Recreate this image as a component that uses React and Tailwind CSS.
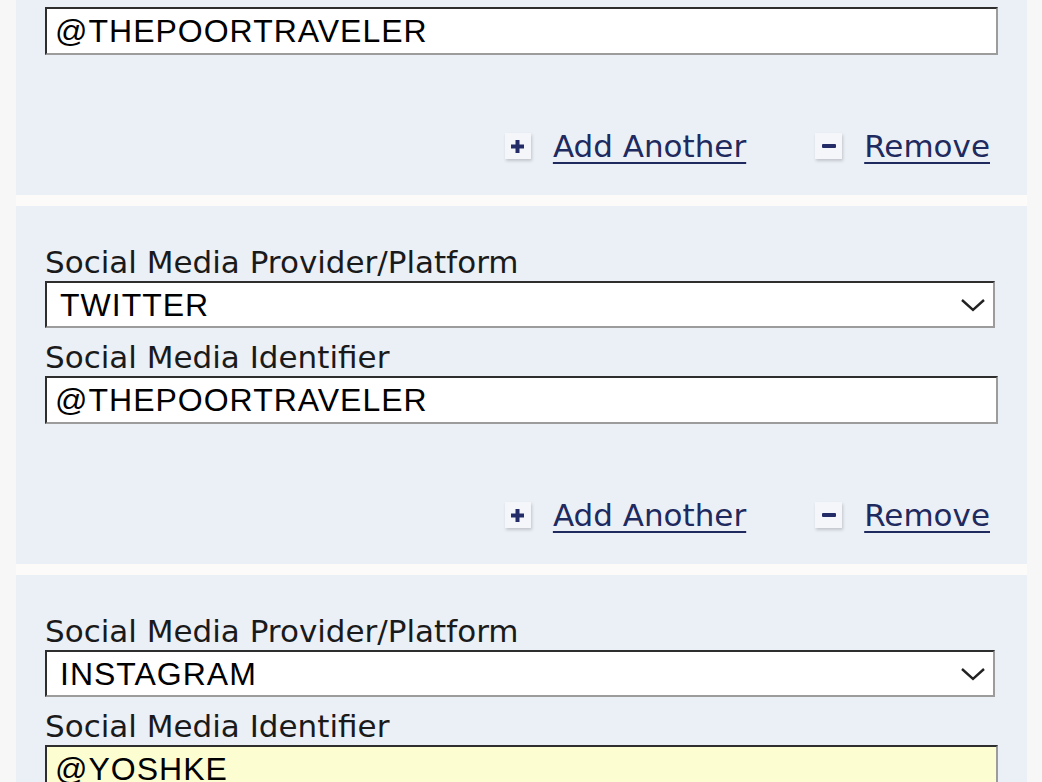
import { useState } from 'react';

const labelFont = { fontFamily: '"DejaVu Sans", Verdana, sans-serif' };
const fieldFont = { fontFamily: '"Liberation Sans", Arial, sans-serif' };

function PlusIcon() {
  return (
    <span className="flex h-[26px] w-[26px] items-center justify-center bg-[#f4f6fa] shadow-[1px_2px_3px_rgba(0,0,0,0.18)]">
      <svg width="15" height="15" viewBox="0 0 15 15">
        <rect x="5.5" y="1" width="4" height="13" fill="#232c66" />
        <rect x="1" y="5.5" width="13" height="4" fill="#232c66" />
      </svg>
    </span>
  );
}

function MinusIcon() {
  return (
    <span className="flex h-[26px] w-[27px] items-center justify-center bg-[#f4f6fa] shadow-[1px_2px_3px_rgba(0,0,0,0.18)]">
      <svg width="16" height="14" viewBox="0 0 16 14">
        <rect x="1" y="5" width="14" height="4" rx="1" fill="#232c66" />
      </svg>
    </span>
  );
}

function Links() {
  return (
    <div className="flex h-[40px] items-center justify-end gap-[22px] pr-[37px] text-[31px] text-[#1f2a5e]" style={labelFont}>
      <PlusIcon />
      <a href="#" className="underline decoration-[2px] underline-offset-[5px]">Add Another</a>
      <span className="w-[25px]" />
      <MinusIcon />
      <a href="#" className="underline decoration-[2px] underline-offset-[5px]">Remove</a>
    </div>
  );
}

function Field({ value, highlight }) {
  return (
    <div
      className={`flex h-[48px] w-[953px] items-center border-2 border-t-[#2e2e2e] border-l-[#2e2e2e] border-b-[#9c9c9c] border-r-[#9c9c9c] pl-[8px] text-[32px] tracking-[1px] text-black ${highlight ? 'bg-[#fdfdd2]' : 'bg-white'}`}
      style={fieldFont}
    >
      {value}
    </div>
  );
}

function Select({ value }) {
  return (
    <div
      className="flex h-[47px] w-[950px] items-center justify-between border-2 border-t-[#2e2e2e] border-l-[#2e2e2e] border-b-[#9c9c9c] border-r-[#9c9c9c] bg-white pl-[13px] pr-[7px] text-[32px] tracking-[1px] text-black"
      style={fieldFont}
    >
      <span>{value}</span>
      <svg width="26" height="16" viewBox="0 0 26 16">
        <path d="M2 3 L13 13 L24 3" fill="none" stroke="#222" strokeWidth="2.4" />
      </svg>
    </div>
  );
}

function Label({ children }) {
  return (
    <div className="flex h-[38px] items-center text-[31px] leading-none text-[#1a1a1a]" style={labelFont}>
      {children}
    </div>
  );
}

function Panel({ platform, identifier, highlight, partial, last }) {
  return (
    <div className={`bg-[#ebf0f7] pl-[29px] pb-[29px] ${partial ? 'pt-[7px]' : 'pt-[37px]'}`}>
      {!partial && (
        <>
          <Label>Social Media Provider/Platform</Label>
          <Select value={platform} />
          <div className="h-[10px]" />
          <Label>Social Media Identifier</Label>
        </>
      )}
      <Field value={identifier} highlight={highlight} />
      {!last && (
        <>
          <div className="h-[71px]" />
          <Links />
        </>
      )}
    </div>
  );
}

export default function App() {
  const [entries] = useState([
    { platform: 'TWITTER', identifier: '@THEPOORTRAVELER', partial: true },
    { platform: 'TWITTER', identifier: '@THEPOORTRAVELER' },
    { platform: 'INSTAGRAM', identifier: '@YOSHKE', highlight: true, last: true },
  ]);

  return (
    <div className="h-[782px] w-[1042px] overflow-hidden bg-[#f7f7f8]">
      <div className="ml-[16px] mr-[15px] flex flex-col gap-[11px] bg-[#fdfbf9]">
        {entries.map((e, i) => (
          <Panel key={i} {...e} />
        ))}
      </div>
    </div>
  );
}
